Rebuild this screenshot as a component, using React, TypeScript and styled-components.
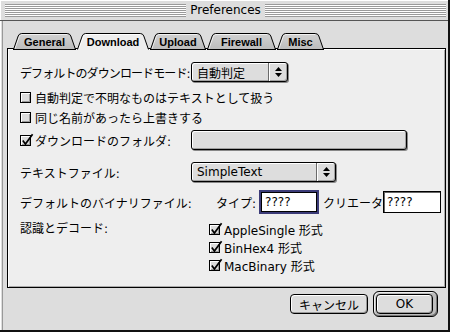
import * as React from 'react';
import styled, { createGlobalStyle } from 'styled-components';

const GlobalStyle = createGlobalStyle`
    html, body {
        margin: 0;
        padding: 0;
        background: #ffffff;
    }
    body {
        font-family: "DejaVu Sans", "Noto Sans CJK JP", sans-serif;
        font-size: 12px;
        color: #000;
    }
`

const Window = styled.div`
    width: 448px;
    height: 330px;
    background: #dddddd;
    border-right: 2px solid #111;
    border-bottom: 2px solid #111;
    box-shadow: inset 1px 1px 0 #ffffff;
    display: flex;
    flex-direction: column;
`

const TitleBar = styled.div`
    height: 20px;
    flex-shrink: 0;
    border-bottom: 1px solid #555;
    display: flex;
    align-items: center;
    padding: 0 2px 0 5px;
    gap: 3px;
`

const Stripes = styled.div`
    flex: 1;
    height: 13px;
    margin-top: 1px;
    background: repeating-linear-gradient(to bottom, #9a9a9a 0 1px, #ffffff 1px 2px);
    box-shadow: inset 0 -1px 0 #9a9a9a;
`

const Title = styled.div`
    font-family: "DejaVu Sans", sans-serif;
    font-size: 12px;
    line-height: 20px;
    padding: 0 1px;
`

const Body = styled.div`
    flex: 1;
    margin-left: 2px;
    border-left: 1px solid #999;
    padding: 12px 2px 0 4px;
    display: flex;
    flex-direction: column;
`

const TabRow = styled.div`
    display: flex;
    gap: 1px;
    height: 16px;
    margin-left: 6px;
    position: relative;
    z-index: 1;
    margin-bottom: -1px;
`

const TabBox = styled.div<{ $w: number }>`
    position: relative;
    width: ${p => p.$w}px;
    height: 17px;
    flex-shrink: 0;
`

const TabShape = styled.svg`
    position: absolute;
    left: 0;
    top: 0;
`

const TabLabel = styled.span`
    position: relative;
    display: block;
    text-align: center;
    font-family: "Liberation Sans", Arial, sans-serif;
    font-weight: bold;
    font-size: 11px;
    line-height: 16px;
    padding-top: 1px;
`

const Panel = styled.div`
    height: 240px;
    box-sizing: border-box;
    border: 1px solid #000;
    background: #eeeeee;
    box-shadow: inset 1px 1px 0 #ffffff, inset -1px -1px 0 #aaaaaa;
    padding: 0 0 0 12px;
    display: flex;
    flex-direction: column;
`

const Row = styled.div<{ $h: number; $mt: number; $top?: boolean }>`
    display: flex;
    align-items: ${p => (p.$top ? 'flex-start' : 'center')};
    height: ${p => p.$h}px;
    margin-top: ${p => p.$mt}px;
    white-space: nowrap;
`

const Label = styled.div<{ $tight?: boolean; $lh?: number }>`
    width: 171px;
    flex-shrink: 0;
    letter-spacing: ${p => (p.$tight ? '-0.9px' : '0')};
    line-height: ${p => (p.$lh ? `${p.$lh}px` : 'normal')};
`

const Text = styled.span<{ $ml?: number }>`
    margin-left: ${p => p.$ml ?? 0}px;
`

const CheckLine = styled.label<{ $w?: number }>`
    display: flex;
    align-items: center;
    gap: 4px;
    width: ${p => (p.$w ? `${p.$w}px` : 'auto')};
    flex-shrink: 0;
`

const Box = styled.span`
    position: relative;
    width: 11px;
    height: 11px;
    box-sizing: border-box;
    border: 1px solid #000;
    background: #dcdcdc;
    box-shadow: inset 1px 1px 0 #ffffff, inset -1px -1px 0 #9a9a9a;
    flex-shrink: 0;
`

const Tick = styled.svg`
    position: absolute;
    left: 0;
    top: -3px;
    overflow: visible;
`

const Popup = styled.div<{ $w: number }>`
    width: ${p => p.$w}px;
    height: 20px;
    box-sizing: border-box;
    border: 1px solid #000;
    border-radius: 3px;
    background: #dddddd;
    box-shadow: inset 1px 1px 0 #ffffff, inset -1px -1px 0 #a0a0a0, 1px 1px 0 #888;
    display: flex;
    align-items: center;
`

const PopupText = styled.span`
    flex: 1;
    padding-left: 5px;
    font-family: "DejaVu Sans", "Noto Sans CJK JP", sans-serif;
`

const PopupArrow = styled.span`
    width: 19px;
    height: 100%;
    box-sizing: border-box;
    border-left: 1px solid #6a6a6a;
    box-shadow: inset 1px 0 0 #ffffff;
    display: flex;
    align-items: center;
    justify-content: center;
`

const FolderButton = styled.div`
    width: 216px;
    height: 20px;
    box-sizing: border-box;
    border: 1px solid #000;
    border-radius: 3px;
    background: #dddddd;
    box-shadow: inset 1px 1px 0 #ffffff, inset -1px -1px 0 #a0a0a0, 1px 1px 0 #888;
`

const Field = styled.div<{ $w: number; $focus?: boolean; $ml: number }>`
    width: ${p => p.$w}px;
    height: ${p => (p.$focus ? 24 : 22)}px;
    margin-left: ${p => p.$ml}px;
    box-sizing: border-box;
    background: #ffffff;
    border: ${p => (p.$focus ? '2px solid #3b3b78' : '1px solid #000')};
    box-shadow: ${p => (p.$focus ? 'inset 0 0 0 1px #000' : 'inset 1px 1px 0 #666')};
    padding-left: ${p => (p.$focus ? 4 : 3)}px;
    display: flex;
    align-items: center;
    font-family: "DejaVu Sans", sans-serif;
    flex-shrink: 0;
`

const CheckList = styled.div`
    margin-left: 18px;
    display: flex;
    flex-direction: column;
`

const CheckItem = styled(CheckLine)`
    height: 18px;
`

const ButtonRow = styled.div`
    display: flex;
    justify-content: flex-end;
    align-items: center;
    gap: 5px;
    padding: 3px 8px 0 0;
`

const Button = styled.div<{ $w: number }>`
    width: ${p => p.$w}px;
    height: 20px;
    box-sizing: border-box;
    border: 1px solid #000;
    border-radius: 4px;
    background: #dddddd;
    box-shadow: inset 1px 1px 0 #ffffff, inset -1px -1px 0 #999;
    display: flex;
    align-items: center;
    justify-content: center;
    font-family: "DejaVu Sans", "Noto Sans CJK JP", sans-serif;
`

const DefaultRing = styled.div`
    width: 65px;
    height: 26px;
    box-sizing: border-box;
    border: 1px solid #000;
    border-radius: 6px;
    background: #bdbdbd;
    box-shadow: inset 1px 1px 0 #eeeeee, inset -1px -1px 0 #777;
    padding: 2px;
    display: flex;
`

const tabs = [
    { name: 'General', w: 63 },
    { name: 'Download', w: 72, active: true },
    { name: 'Upload', w: 56 },
    { name: 'Firewall', w: 69 },
    { name: 'Misc', w: 47 },
];

const Tab: React.FC<{ name: string; w: number; active?: boolean }> = ({ name, w, active }) => {
    const edge = `M0.5,16.5 L5.2,3 Q6.2,0.5 8.7,0.5 L${w - 8.7},0.5 Q${w - 6.2},0.5 ${w - 5.2},3 L${w - 0.5},16.5`;
    return (
        <TabBox $w={w}>
            <TabShape width={w} height={17}>
                <defs>
                    <linearGradient id={`g-${name}`} x1="0" y1="0" x2="0" y2="1">
                        <stop offset="0" stopColor={active ? '#eeeeee' : '#d2d2d2'} />
                        <stop offset="1" stopColor={active ? '#eeeeee' : '#bbbbbb'} />
                    </linearGradient>
                </defs>
                <path d={`${edge} L${w - 0.5},17 L0.5,17 Z`} fill={`url(#g-${name})`} />
                <path d={`M1.8,16 L6.3,3.4 Q7,1.5 9,1.5 L${w - 9},1.5`} fill="none" stroke="#ffffff" strokeWidth="1" opacity={active ? 1 : 0.7} />
                <path d={edge} fill="none" stroke="#000" strokeWidth="1" />
                {!active && <line x1="0" y1="16.5" x2={w} y2="16.5" stroke="#000" strokeWidth="1" />}
            </TabShape>
            <TabLabel>{name}</TabLabel>
        </TabBox>
    );
};

const Check: React.FC<{ checked?: boolean }> = ({ checked }) => (
    <Box>
        {checked && (
            <Tick width={13} height={13}>
                <path d="M1.8,7.6 L4.4,11 L11.6,1.2" fill="none" stroke="#000" strokeWidth="1.7" />
            </Tick>
        )}
    </Box>
);

const Arrows: React.FC = () => (
    <svg width={7} height={10}>
        <path d="M0,4 L3.5,0 L7,4 Z" fill="#000" />
        <path d="M0,6 L3.5,10 L7,6 Z" fill="#000" />
    </svg>
);

const App: React.FC = () => {
    return (
        <>
            <GlobalStyle />
            <Window>
                <TitleBar>
                    <Stripes />
                    <Title>Preferences</Title>
                    <Stripes />
                </TitleBar>
                <Body>
                    <TabRow>
                        {tabs.map(t => <Tab key={t.name} {...t} />)}
                    </TabRow>
                    <Panel>
                        <Row $h={20} $mt={13}>
                            <Label $tight>デフォルトのダウンロードモード:</Label>
                            <Popup $w={97}>
                                <PopupText>自動判定</PopupText>
                                <PopupArrow><Arrows /></PopupArrow>
                            </Popup>
                        </Row>
                        <Row $h={20} $mt={5}>
                            <CheckLine>
                                <Check />
                                <span>自動判定で不明なものはテキストとして扱う</span>
                            </CheckLine>
                        </Row>
                        <Row $h={20} $mt={0}>
                            <CheckLine>
                                <Check />
                                <span>同じ名前があったら上書きする</span>
                            </CheckLine>
                        </Row>
                        <Row $h={20} $mt={3}>
                            <CheckLine $w={171}>
                                <Check checked />
                                <span>ダウンロードのフォルダ:</span>
                            </CheckLine>
                            <FolderButton />
                        </Row>
                        <Row $h={20} $mt={12}>
                            <Label>テキストファイル:</Label>
                            <Popup $w={145}>
                                <PopupText>SimpleText</PopupText>
                                <PopupArrow><Arrows /></PopupArrow>
                            </Popup>
                        </Row>
                        <Row $h={24} $mt={8}>
                            <Label>デフォルトのバイナリファイル:</Label>
                            <Text $ml={25}>タイプ:</Text>
                            <Field $w={60} $ml={3} $focus>????</Field>
                            <Text $ml={4}>クリエータ</Text>
                            <Field $w={58} $ml={0}>????</Field>
                        </Row>
                        <Row $h={54} $mt={6} $top>
                            <Label $lh={18}>認識とデコード:</Label>
                            <CheckList>
                                <CheckItem><Check checked /><span>AppleSingle 形式</span></CheckItem>
                                <CheckItem><Check checked /><span>BinHex4 形式</span></CheckItem>
                                <CheckItem><Check checked /><span>MacBinary 形式</span></CheckItem>
                            </CheckList>
                        </Row>
                    </Panel>
                    <ButtonRow>
                        <Button $w={78}>キャンセル</Button>
                        <DefaultRing>
                            <Button $w={57}>OK</Button>
                        </DefaultRing>
                    </ButtonRow>
                </Body>
            </Window>
        </>
    );
};

export default App;
